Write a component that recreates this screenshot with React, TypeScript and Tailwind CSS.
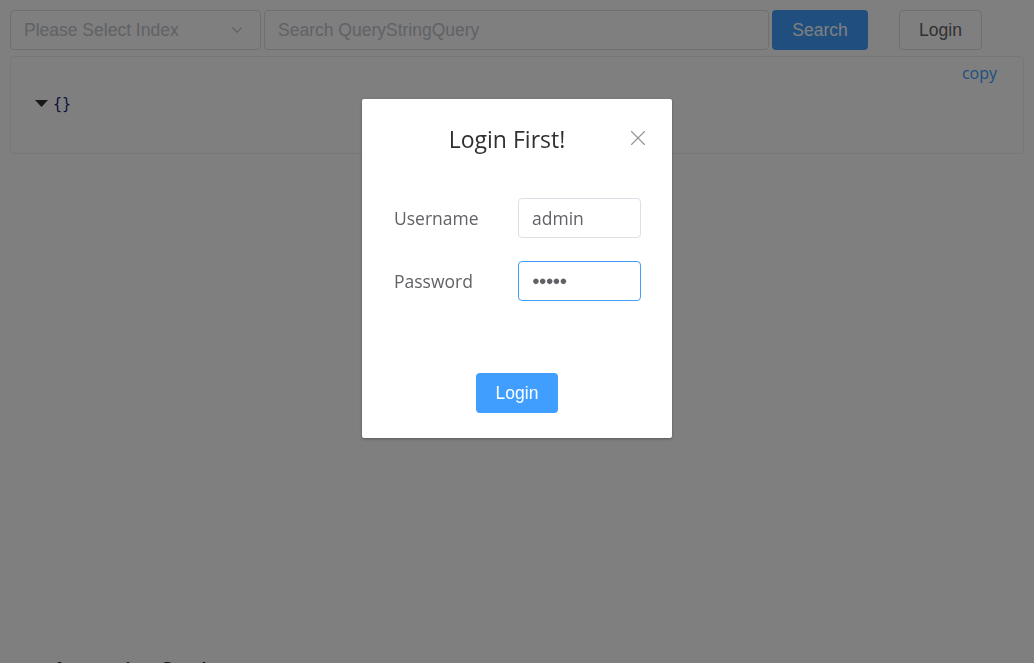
import { ChevronDown, X } from 'lucide-react'

export default function App() {
  return (
    <div className="relative min-h-[700px] bg-white font-['Liberation_Sans',Arial,sans-serif] text-[#303133]">
      <div className="flex items-center gap-[3px] px-[10px] pt-[10px]">
        <div className="flex h-10 w-[251px] items-center justify-between rounded-[4px] border border-[#dcdfe6] pl-[13px] pr-[14px]">
          <span className="text-[17.5px] leading-[38px] text-[#c0c4cc]">Please Select Index</span>
          <ChevronDown className="h-[18px] w-[18px] text-[#c0c4cc]" strokeWidth={1.5} />
        </div>
        <div className="flex h-10 w-[505px] items-center rounded-[4px] border border-[#dcdfe6] px-[13px]">
          <span className="text-[17.5px] leading-[38px] text-[#c0c4cc]">Search QueryStringQuery</span>
        </div>
        <button className="h-10 w-[96px] rounded-[4px] bg-[#409eff] text-[17.5px] text-white">Search</button>
        <button className="ml-[28px] h-10 w-[83px] rounded-[4px] border border-[#dcdfe6] bg-white text-[17.5px] text-[#606266]">
          Login
        </button>
      </div>

      <div className="mx-[10px] mt-[6px] h-[98px] rounded-[4px] border border-[#ebeef5] px-6 pt-[4px]">
        <div className="flex justify-end pr-[2px]">
          <span className="font-['Open_Sans',sans-serif] text-[16px] text-[#409eff]">copy</span>
        </div>
        <div className="mt-[8px] flex items-center">
          <svg width="13" height="8" viewBox="0 0 13 8" className="mr-[5px]">
            <polygon points="0,0 13,0 6.5,7" fill="#333" />
          </svg>
          <span className="font-['DejaVu_Sans_Mono',monospace] text-[15px] text-[#1a237e]">{'{}'}</span>
        </div>
      </div>

      <div className="absolute left-[54px] top-[656px] font-['Open_Sans',sans-serif] text-[16px] font-bold text-[#303133]">
        Aggregations Result
      </div>

      <div className="fixed inset-0 bg-black/50" />

      <div className="fixed left-[362px] top-[99px] h-[339px] w-[310px] rounded-[2px] bg-white font-['Open_Sans',sans-serif] shadow-[0_1px_3px_rgba(0,0,0,0.3)]">
        <div className="relative flex justify-center pr-[20px] pt-[23px]">
          <span className="text-[23px] leading-[34px] text-[#303133]">Login First!</span>
          <X className="absolute right-[21px] top-[26px] h-[26px] w-[26px] text-[#909399]" strokeWidth={1} />
        </div>
        <div className="mt-[42px] flex flex-col gap-[23px] pl-[32px] pr-[31px]">
          <div className="flex items-center justify-between">
            <span className="text-[17.5px] text-[#606266]">Username</span>
            <div className="flex h-10 w-[123px] items-center rounded-[4px] border border-[#dcdfe6] px-[13px]">
              <span className="text-[17.5px] text-[#606266]">admin</span>
            </div>
          </div>
          <div className="flex items-center justify-between">
            <span className="text-[17.5px] text-[#606266]">Password</span>
            <div className="flex h-10 w-[123px] items-center rounded-[4px] border border-[#409eff] px-[13px]">
              <span className="text-[13px] tracking-[-1px] text-[#606266]">●●●●●</span>
            </div>
          </div>
        </div>
        <div className="mt-[72px] flex justify-center">
          <button className="h-10 w-[82px] rounded-[4px] bg-[#409eff] font-['Liberation_Sans',Arial,sans-serif] text-[17.5px] text-white">
            Login
          </button>
        </div>
      </div>
    </div>
  )
}
